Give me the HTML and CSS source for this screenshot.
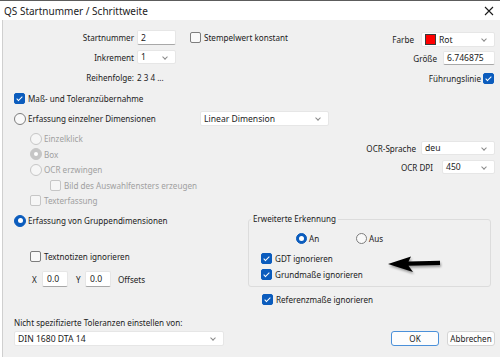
FILE: index.html
```html
<!DOCTYPE html>
<html>
<head>
    <title>QS Startnummer / Schrittweite</title>
    <link rel="stylesheet" href="styles.css">
</head>
<body>
    <div class="titlebar">
        <span class="title">QS Startnummer / Schrittweite</span>
        <svg class="close" width="10" height="10" viewBox="0 0 10 10">
            <path d="M1 1 L9 9 M9 1 L1 9" stroke="#1b1b1b" stroke-width="1.1" fill="none"/>
        </svg>
    </div>

    <div class="content">
        <!-- Start number / style -->
        <div class="top">
            <div class="numbers">
                <span class="lbl">Startnummer</span>
                <div class="input">2</div>
                <span class="lbl">Inkrement</span>
                <div class="select">1</div>
                <span class="lbl">Reihenfolge:</span>
                <span>2 3 4 ...</span>
            </div>

            <div class="row stempel">
                <span class="box"></span>Stempelwert konstant
            </div>

            <div class="style">
                <div class="srow farbe-row">
                    <span>Farbe</span>
                    <div class="select farbe"><span class="swatch"></span>Rot</div>
                </div>
                <div class="srow groesse-row">
                    <span>Größe</span>
                    <div class="input groesse">6.746875</div>
                </div>
                <div class="srow linie-row">
                    <span>Führungslinie</span>
                    <span class="box checked"></span>
                </div>
            </div>
        </div>

        <!-- Single dimensions -->
        <div class="row mass-row">
            <span class="box checked"></span>Maß- und Toleranzübernahme
        </div>
        <div class="row single-row">
            <span class="single-label"><span class="radio"></span>Erfassung einzelner Dimensionen</span>
            <div class="select linear">Linear Dimension</div>
        </div>

        <div class="options-area">
            <div class="options">
                <div class="opt disabled"><span class="radio"></span>Einzelklick</div>
                <div class="opt disabled"><span class="radio dot"></span>Box</div>
                <div class="opt disabled"><span class="radio"></span>OCR erzwingen</div>
                <div class="opt disabled sub"><span class="box"></span>Bild des Auswahlfensters erzeugen</div>
                <div class="opt disabled"><span class="box"></span>Texterfassung</div>
            </div>
            <div class="ocr">
                <div class="srow">
                    <span class="ocr-lang">OCR-Sprache</span>
                    <div class="select ocr-select">deu</div>
                </div>
                <div class="srow">
                    <span class="ocr-dpi">OCR DPI</span>
                    <div class="select dpi-select">450</div>
                </div>
            </div>
        </div>

        <!-- Group dimensions -->
        <div class="lower">
            <div class="lower-left">
                <div class="row"><span class="radio checked"></span>Erfassung von Gruppendimensionen</div>
                <div class="row textnotizen"><span class="box"></span>Textnotizen ignorieren</div>
                <div class="offsets">
                    <span class="axis">X</span>
                    <div class="input small">0.0</div>
                    <span class="axis y">Y</span>
                    <div class="input small">0.0</div>
                    <span class="offsets-label">Offsets</span>
                </div>
                <div class="tol-label">Nicht spezifizierte Toleranzen einstellen von:</div>
                <div class="select din">DIN 1680 DTA 14</div>
            </div>

            <div class="lower-right">
                <fieldset class="group">
                    <legend>Erweiterte Erkennung</legend>
                    <div class="onoff">
                        <span class="on"><span class="radio checked"></span>An</span>
                        <span><span class="radio"></span>Aus</span>
                    </div>
                    <div class="row gdt"><span class="box checked"></span>GDT ignorieren</div>
                    <div class="row grund"><span class="box checked"></span>Grundmaße ignorieren</div>
                </fieldset>
                <div class="row referenz"><span class="box checked"></span>Referenzmaße ignorieren</div>
                <div class="buttons">
                    <button class="btn default">OK</button>
                    <button class="btn">Abbrechen</button>
                </div>
            </div>
        </div>
    </div>

    <!-- annotation arrow -->
    <svg class="arrow" width="56" height="20" viewBox="0 0 56 20">
        <polygon points="0,8 23,0.5 20.5,5.5 52,4.8 52,9 20.5,9.8 25,16" fill="#000"/>
    </svg>
</body>
</html>
```

FILE: styles.css
```css
* {
    margin: 0px;
    padding: 0px;
    box-sizing: border-box;
    font-family: 'Noto Sans', sans-serif;
}

html {
    background-color: #ffffff;
}

body {
    font-size: 8.1px;
    color: #1b1b1b;
    position: relative;
}

.titlebar {
    height: 20px;
    background-color: #ffffff;
    border-top: 1px solid #5c5c5c;
    display: flex;
    align-items: center;
    justify-content: space-between;
    padding: 0 6px 0 4px;
}

.title {
    font-size: 10px;
}

.content {
    margin-left: 2px;
    border-left: 1px solid #cfcfcf;
    background-color: #f0f0f0;
    padding: 10px 5px 0 11px;
    min-height: calc(100vh - 20px);
}

/* generic controls */
.row {
    display: flex;
    align-items: center;
    height: 15px;
    white-space: nowrap;
}

.box {
    display: inline-block;
    flex-shrink: 0;
    width: 11px;
    height: 11px;
    border: 1px solid #7d7d7d;
    border-radius: 2px;
    background-color: #f9f9f9;
    margin-right: 3px;
    position: relative;
}

.box.checked {
    background-color: #0b5cbd;
    border-color: #0b5cbd;
}

.box.checked::after {
    content: "";
    position: absolute;
    left: 3px;
    top: 1px;
    width: 2px;
    height: 5px;
    border-right: 1px solid #ffffff;
    border-bottom: 1px solid #ffffff;
    transform: rotate(45deg);
}

.radio {
    display: inline-block;
    flex-shrink: 0;
    width: 12px;
    height: 12px;
    border: 1px solid #7d7d7d;
    border-radius: 50%;
    background-color: #f9f9f9;
    margin-right: 2px;
    position: relative;
}

.radio.checked {
    background-color: #0b5cbd;
    border-color: #0b5cbd;
}

.radio.checked::after {
    content: "";
    position: absolute;
    left: 2.5px;
    top: 2.5px;
    width: 5px;
    height: 5px;
    border-radius: 50%;
    background-color: #ffffff;
}

.input,
.select {
    height: 15px;
    background-color: #ffffff;
    border: 1px solid #e6e6e6;
    border-bottom-color: #a8a8a8;
    border-radius: 2px;
    padding-left: 3px;
    display: flex;
    align-items: center;
    white-space: nowrap;
    font-size: 8.6px;
}

.select {
    position: relative;
    border-bottom-color: #e6e6e6;
}

.select::after {
    content: "";
    position: absolute;
    right: 8px;
    top: 4px;
    width: 3px;
    height: 3px;
    border-right: 1px solid #8a8a8a;
    border-bottom: 1px solid #8a8a8a;
    transform: rotate(45deg);
}

/* top block */
.top {
    display: flex;
    align-items: flex-start;
}

.numbers {
    display: grid;
    grid-template-columns: 120px 39px;
    grid-template-rows: 15px 14px 16px;
    column-gap: 3px;
    row-gap: 5px;
    align-items: center;
}

.numbers .lbl {
    justify-self: end;
}

.numbers .select {
    height: 14px;
}

.stempel {
    margin-left: 14px;
}

.style {
    margin-left: auto;
    padding-top: 2px;
    display: flex;
    flex-direction: column;
    align-items: flex-end;
}

.srow {
    display: flex;
    align-items: center;
    justify-content: flex-end;
    white-space: nowrap;
}

.farbe-row {
    height: 15px;
}

.farbe {
    width: 74px;
    margin-left: 7px;
}

.swatch {
    display: inline-block;
    width: 11px;
    height: 11px;
    background-color: #ff0000;
    border: 1px solid #3a3a3a;
    margin-right: 3px;
}

.groesse-row {
    height: 14px;
    margin-top: 4px;
}

.groesse {
    width: 52px;
    height: 14px;
    margin-left: 6px;
}

.linie-row {
    height: 13px;
    margin-top: 7px;
    margin-right: 1px;
}

.linie-row .box {
    margin: 0 0 0 2px;
}

/* single dimensions */
.mass-row {
    margin-top: 6px;
}

.single-row {
    margin-top: 5px;
}

.single-label {
    display: flex;
    align-items: center;
    width: 186px;
}

.linear {
    width: 129px;
}

.options-area {
    display: flex;
    margin-top: 5px;
}

.options {
    padding-left: 16px;
}

.opt {
    display: flex;
    align-items: center;
    height: 15.5px;
    white-space: nowrap;
}

.opt.sub {
    padding-left: 20px;
}

.disabled {
    color: #a0a0a0;
}

.disabled .radio,
.disabled .box {
    border-color: #c6c6c6;
    background-color: #f6f6f6;
}

.radio.dot {
    background-color: #c6c6c6;
}

.radio.dot::after {
    content: "";
    position: absolute;
    left: 3px;
    top: 3px;
    width: 4px;
    height: 4px;
    border-radius: 50%;
    background-color: #ffffff;
}

.ocr {
    margin-left: auto;
    margin-top: 10px;
}

.ocr .srow {
    height: 14px;
    margin-bottom: 5px;
}

.ocr .select {
    height: 14px;
}

.ocr-select {
    width: 74px;
    margin-left: 5px;
}

.dpi-select {
    width: 53px;
    margin-left: 9px;
}

/* group dimensions */
.lower {
    display: flex;
    margin-top: 4.5px;
}

.lower-left {
    width: 234px;
}

.textnotizen {
    margin-top: 20.5px;
    padding-left: 16px;
}

.offsets {
    display: flex;
    align-items: center;
    height: 16px;
    margin-top: 7.5px;
    padding-left: 18px;
}

.axis {
    width: 10px;
}

.axis.y {
    width: 17px;
    padding-left: 8px;
}

.input.small {
    height: 16px;
    width: 26px;
    padding-left: 4px;
}

.offsets-label {
    margin-left: 7px;
}

.tol-label {
    margin-top: 30px;
    height: 12px;
    line-height: 12px;
}

.din {
    margin-top: 2px;
    width: 210px;
}

.lower-right {
    width: 247px;
}

.group {
    width: 243px;
    border: 1px solid #dcdcdc;
    border-radius: 3px;
    padding: 0 0 6px 0;
}

.group legend {
    margin-left: 2px;
    padding: 0 2px;
    height: 12px;
    line-height: 12px;
}

.onoff {
    display: flex;
    align-items: center;
    height: 12px;
    margin-top: 7px;
    padding-left: 47px;
}

.onoff span {
    display: flex;
    align-items: center;
}

.onoff .radio {
    width: 11px;
    height: 11px;
}

.onoff .radio.checked::after {
    left: 2px;
    top: 2px;
}

.on {
    width: 60px;
}

.gdt {
    height: 12px;
    margin-top: 8.3px;
    padding-left: 12px;
}

.grund {
    height: 12px;
    margin-top: 4px;
    padding-left: 12px;
}

.referenz {
    height: 12px;
    margin-top: 6.5px;
    padding-left: 14px;
}

.buttons {
    display: flex;
    justify-content: flex-end;
    gap: 8px;
    margin-top: 25px;
}

.btn {
    width: 48px;
    height: 15px;
    font-size: 8.1px;
    color: #1b1b1b;
    background-color: #fdfdfd;
    border: 1px solid #d5d5d5;
    border-radius: 3px;
}

.btn.default {
    border-color: #4a90d9;
}

.arrow {
    position: absolute;
    left: 388px;
    top: 256px;
    filter: drop-shadow(1px 2px 1px rgba(0, 0, 0, 0.35));
}
```
